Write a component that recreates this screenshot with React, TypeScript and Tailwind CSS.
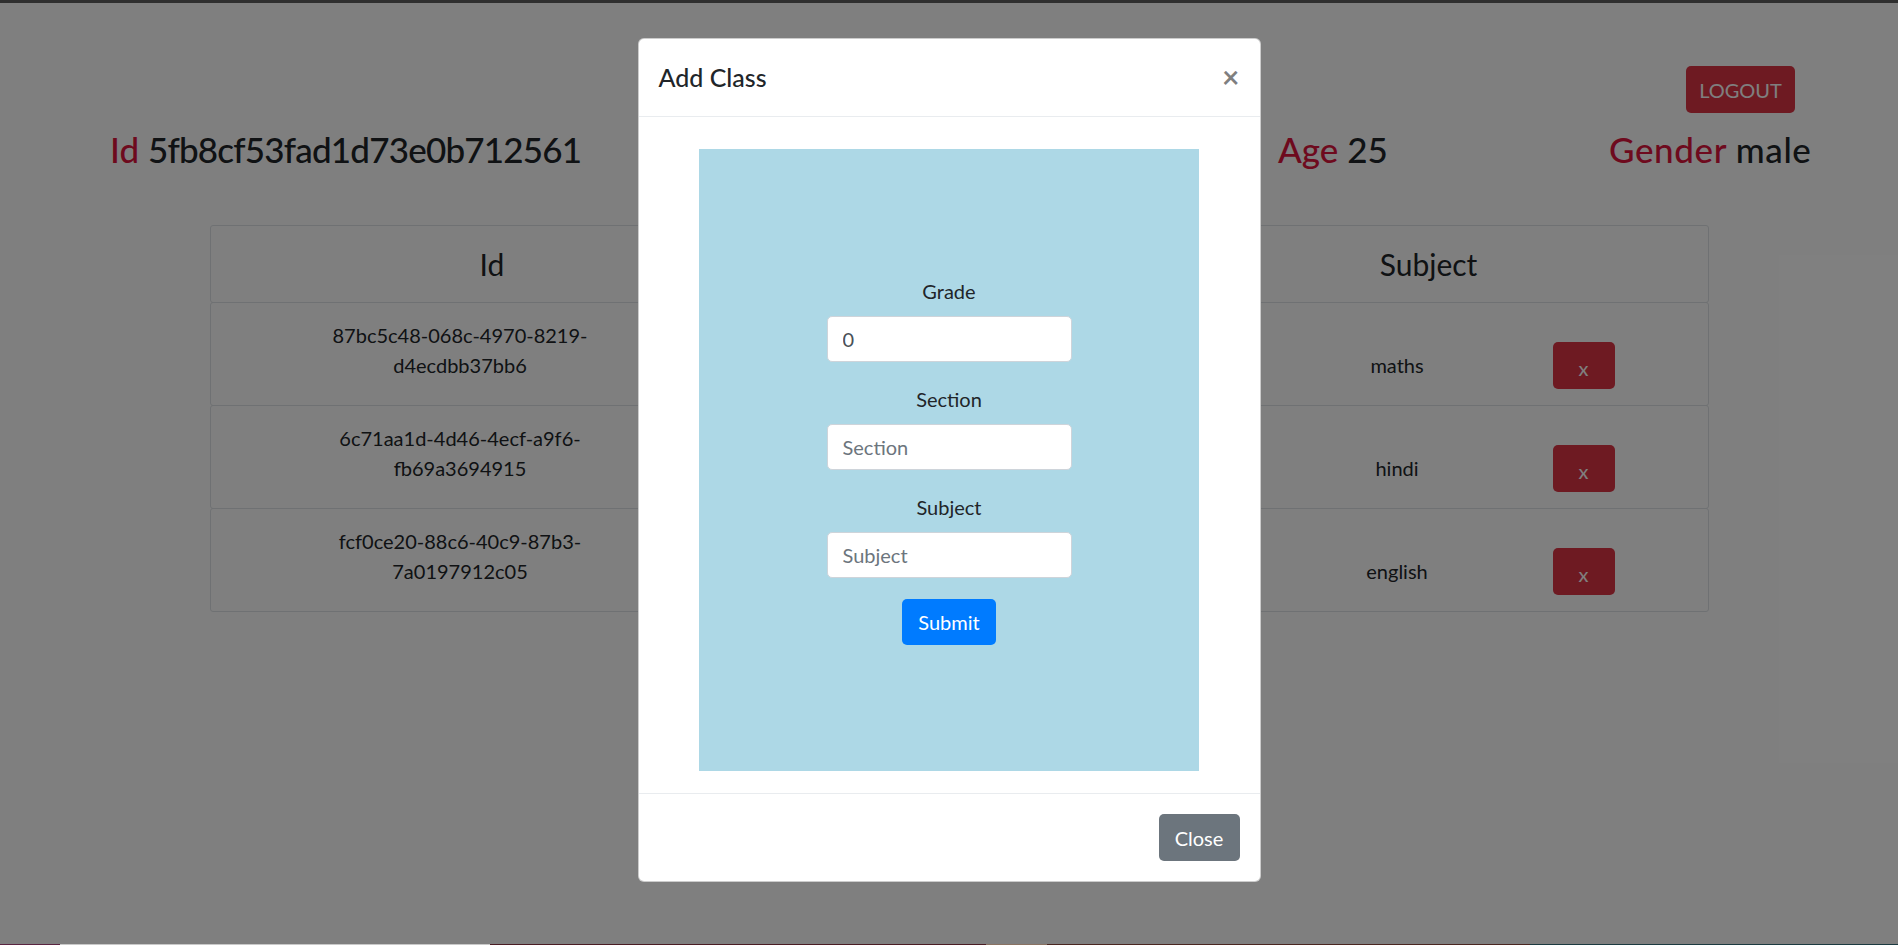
import { useState } from 'react';

interface ClassRow {
  id: string;
  grade: string;
  section: string;
  subject: string;
}

const rows: ClassRow[] = [
  { id: '87bc5c48-068c-4970-8219-d4ecdbb37bb6', grade: '', section: '', subject: 'maths' },
  { id: '6c71aa1d-4d46-4ecf-a9f6-fb69a3694915', grade: '', section: '', subject: 'hindi' },
  { id: 'fcf0ce20-88c6-40c9-87b3-7a0197912c05', grade: '', section: '', subject: 'english' },
];

// taskbar edge peeking under the screenshot
const strip = [
  { w: 'w-[60px]', bg: 'bg-[#5a2440]' },
  { w: 'w-[430px]', bg: 'bg-[#c9c9c9]' },
  { w: 'w-[496px]', bg: 'bg-[#4a1c24]' },
  { w: 'w-[61px]', bg: 'bg-[#8a7262]' },
  { w: 'w-[483px]', bg: 'bg-[#4a2620]' },
  { w: 'w-[368px]', bg: 'bg-[#1c3a40]' },
];

function Field({ label, placeholder, value }: { label: string; placeholder: string; value?: string }) {
  return (
    <div className="flex flex-col items-center">
      <label className="mb-[10px] text-[20px] leading-[30px] text-[#212529]">{label}</label>
      <input
        defaultValue={value}
        placeholder={placeholder}
        className="h-[46px] w-[245px] rounded-[5px] border border-[#ced4da] bg-white px-[15px] text-[20px] text-[#495057] outline-none placeholder:text-[#6c757d]"
      />
    </div>
  );
}

export default function App() {
  const [open, setOpen] = useState(true);

  return (
    <div className="relative flex h-[945px] w-full flex-col overflow-hidden bg-white font-['Lato','Noto_Sans',sans-serif] text-[#212529]">
      <div className="h-[3px] shrink-0 bg-[#2f2f2f]" />

      <main className="h-[941px] shrink-0">
        <div className="flex justify-end pr-[103px] pt-[63px]">
          <button className="h-[47px] w-[109px] rounded-[5px] bg-[#dc3545] text-[20px] text-white">LOGOUT</button>
        </div>

        {/* profile line */}
        <div className="mt-[15px] flex h-[42px] items-center pl-[110px] text-[35px] font-medium leading-[42px]">
          <div className="w-[1168px]">
            <span className="text-[#dc143c]">Id</span> <span className="tracking-[-0.8px]">5fb8cf53fad1d73e0b712561</span>
          </div>
          <div className="w-[331px]">
            <span className="text-[#dc143c]">Age</span> 25
          </div>
          <div className="tracking-[0.6px]">
            <span className="text-[#dc143c]">Gender</span> male
          </div>
        </div>

        {/* classes table */}
        <div className="ml-[210px] mt-[55px] w-[1499px]">
          <div className="grid h-[78px] grid-cols-[562px_188px_188px_1fr] items-center rounded-[3px] border border-[#dee2e6] text-center text-[30px]">
            <div>Id</div>
            <div />
            <div />
            <div>Subject</div>
          </div>
          {rows.map((r) => (
            <div
              key={r.id}
              className="-mt-px grid h-[104px] grid-cols-[498px_313px_313px_124px_1fr] items-start rounded-[3px] border border-[#dee2e6] text-center text-[20px] leading-[30px]"
            >
              <div className="pt-[17px]">
                <div className="mx-auto w-[300px] break-words">{r.id}</div>
              </div>
              <div className="pt-[47px]">{r.grade}</div>
              <div className="pt-[47px]">{r.section}</div>
              <div className="pt-[47px]">{r.subject}</div>
              <div className="pt-[39px]">
                <button className="h-[47px] w-[62px] rounded-[5px] bg-[#dc3545] pt-[4px] text-[20px] text-white">x</button>
              </div>
            </div>
          ))}
        </div>
      </main>

      <div className="flex h-px shrink-0">
        {strip.map((s, i) => (
          <div key={i} className={`${s.w} ${s.bg}`} />
        ))}
      </div>

      {open && (
        <>
          <div className="absolute inset-x-0 top-[3px] h-[941px] bg-black/50" />
          <div className="absolute inset-x-0 top-[3px] h-[941px] overflow-hidden">
            <div className="mx-auto mt-[35px] w-[623px] rounded-[6px] border border-black/20 bg-white">
              <div className="flex h-[78px] items-center justify-between border-b border-[#e9ecef] px-[20px]">
                <h5 className="text-[25px] font-medium">Add Class</h5>
                <button
                  onClick={() => setOpen(false)}
                  className="-mt-[4px] text-[30px] font-bold leading-none text-black/50"
                >
                  ×
                </button>
              </div>

              <div className="pb-[22px] pt-[32px]">
                <div className="mx-auto flex h-[622px] w-[500px] flex-col items-center justify-center gap-[22px] bg-[#add8e6]">
                  <Field label="Grade" placeholder="Grade" value="0" />
                  <Field label="Section" placeholder="Section" />
                  <Field label="Subject" placeholder="Subject" />
                  <button className="-mt-px h-[46px] w-[94px] rounded-[5px] bg-[#007bff] text-[20px] text-white">Submit</button>
                </div>
              </div>

              <div className="flex h-[88px] items-center justify-end border-t border-[#e9ecef] px-[20px]">
                <button
                  onClick={() => setOpen(false)}
                  className="h-[47px] w-[81px] rounded-[5px] bg-[#6c757d] text-[20px] text-white"
                >
                  Close
                </button>
              </div>
            </div>
          </div>
        </>
      )}
    </div>
  );
}
